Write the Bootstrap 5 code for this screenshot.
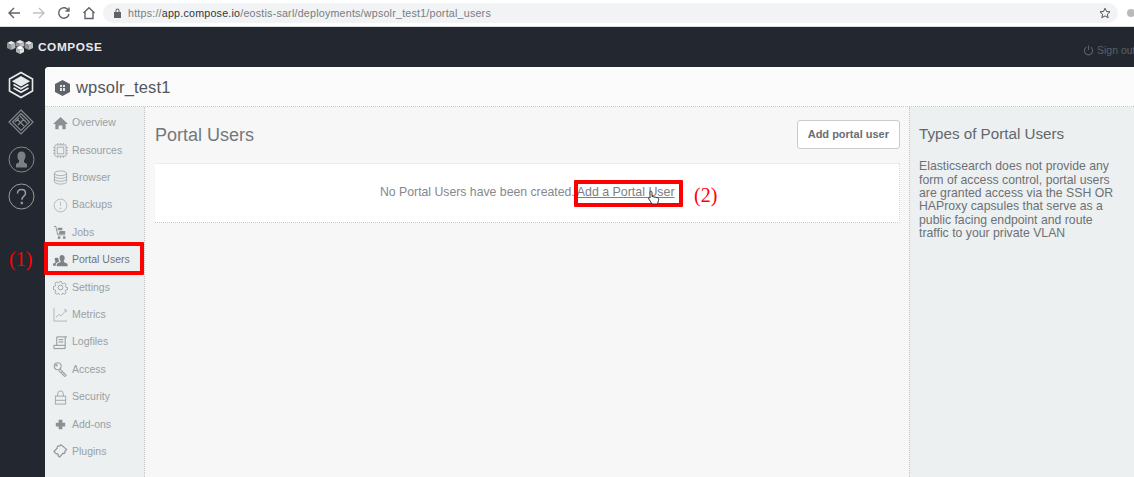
<!DOCTYPE html>
<html lang="en">
<head>
<meta charset="utf-8">
<title>Portal Users</title>
<link rel="stylesheet" href="https://cdn.jsdelivr.net/npm/bootstrap@5.3.0/dist/css/bootstrap.min.css">
<style>
html,body{height:477px;overflow:hidden}
body{font-family:"Liberation Sans",Arial,sans-serif;background:#23272f;color:#777}
.chrome-bar{height:27px;background:#fff;padding-left:7px;border-bottom:1px solid #d8d9db;overflow:hidden}
.chrome-btn{width:14px;height:14px;flex:none;margin-right:11px}
.url-box{height:20px;width:1015px;flex:none;margin-left:-4px;border-radius:10px;background:#f1f3f4;padding:0 7px 0 10px;font-size:10.7px;color:#777c82;letter-spacing:.02em}
.url-box b{font-weight:400;color:#33373c}
.lock-ico{margin-right:6px;flex:none}
.avatar-dot{width:8px;height:8px;border-radius:50%;background:#b8bbbe;flex:none;margin-left:9px}
.top-dark{height:40px;color:#e8e9ea;padding:0 0 0 7px}
.brand-name{font-size:11.8px;font-weight:700;letter-spacing:.05em;margin-left:5px;padding-top:2px}
.sign-out{font-size:10.5px;color:#5c6068;position:absolute;left:1083px;top:43px;white-space:nowrap;display:flex;align-items:center;gap:3px}
.shell{height:410px}
.rail{width:45px;flex:none;padding-right:3px;margin-top:-1px}
.rail-ico{height:37px;margin-bottom:.3px}
.panel{flex:1;min-width:0;background:#f7f7f7;border-top-left-radius:4px;overflow:hidden}
.panel-head{height:40px;background:#fbfbfb;border-bottom:1px dotted #c6c8c9;padding:2px 0 0 10px}
.panel-head h1{font-size:16.5px;font-weight:400;margin:0 0 0 6px;color:#53575c;letter-spacing:.01em}
.side-nav{width:100px;flex:none;background:#ecf0f1;border-right:1px dotted #c4c7c8;padding-top:2.5px}
.nav-row{height:27.4px;font-size:10.5px;color:#9a9fa3;padding-left:8px;gap:4px;white-space:nowrap}
.nav-row.on{color:#70757a}
.nav-row svg{width:15px;height:15px;flex:none}
.content-col{width:764px;flex:none;padding:13px 9px 0 10px}
.content-col h2{font-size:18px;font-weight:400;color:#74787c;margin:5px 0 0}
.add-btn{font-size:11px;font-weight:700;color:#6a6e72;background:#fff;border:1px solid #c9cbcc;border-radius:3px;height:29px;padding:0 10px;line-height:27px}
.empty-box{height:60px;margin-top:14px;background:#fff;border-bottom:1px dotted #c4c7c8;border-right:1px dotted #d4d6d7;border-top:1px solid #ececec;font-size:12.25px;color:#85898e;padding-left:225px;padding-bottom:1px}
.empty-box a{color:#7b8086;margin-left:2px;font-size:12.4px}
.info-col{flex:1;background:#ecf0f1;border-left:1px dotted #c4c7c8;padding:18px 10px 0 9px}
.info-col h3{font-size:15.2px;font-weight:400;color:#63676b;margin:0 0 17px}
.info-col p{font-size:12.25px;line-height:13.4px;color:#6d7175;margin:0;width:197px}
.red-mark{position:absolute;border:4px solid #f00;border-radius:1px}
.mark-one{left:44px;top:242px;width:100px;height:33px}
.mark-two{left:574px;top:180px;width:109px;height:27px}
.red-note{position:absolute;color:#f00;font-family:"Liberation Serif",serif;font-size:20px;line-height:1;white-space:nowrap}
.note-one{left:9px;top:249px}
.note-two{left:694px;top:185px}
.cursor-mark{position:absolute;left:647px;top:190px;width:13px;height:15px}
</style>
</head>
<body>
<div class="chrome-bar d-flex align-items-center">
  <svg class="chrome-btn" viewBox="0 0 14 14" fill="none" stroke="#5f6368" stroke-width="1.4"><path d="M13 7H2M7 2 2 7l5 5"/></svg>
  <svg class="chrome-btn" viewBox="0 0 14 14" fill="none" stroke="#bfc1c4" stroke-width="1.4"><path d="M1 7h11M7 2l5 5-5 5"/></svg>
  <svg class="chrome-btn" viewBox="0 0 14 14" fill="none" stroke="#5f6368" stroke-width="1.4"><path d="M11.5 4.500A5.200 5.200 0 1 0 12 8M12 1.500V5H8.500"/></svg>
  <svg class="chrome-btn" viewBox="0 0 14 14" fill="none" stroke="#5f6368" stroke-width="1.4"><path d="M1.500 7 7 1.800 12.500 7M3 6v6.500h8V6"/></svg>
  <div class="url-box d-flex align-items-center">
    <svg class="lock-ico" width="9" height="10" viewBox="0 0 9 10"><path fill="#5f6368" d="M1 4h7v6H1zM2.500 4V2.500a2 2 0 0 1 4 0V4h-1V2.500a1 1 0 0 0-2 0V4z"/></svg>
    <span>https://<b>app.compose.io</b>/eostis-sarl/deployments/wpsolr_test1/portal_users</span>
    <svg class="ms-auto" width="12" height="12" viewBox="0 0 24 24" fill="none" stroke="#4d5156" stroke-width="2"><path d="m12 2.500 3 6.400 7 .8-5.200 4.700 1.500 7L12 17.800 5.700 21.400l1.500-7L2 9.700l7-.8z"/></svg>
  </div>
  <span class="avatar-dot"></span>
</div>

<div class="top-dark d-flex align-items-center">
  <svg width="26" height="14" viewBox="0 0 26 14">
    <g>
      <path fill="#e4e5e6" d="M0 3 4.200 1l4.200 2-4.200 2z"/><path fill="#8f9296" d="M0 3v5l4.200 2V5z"/><path fill="#b9bbbe" d="M8.400 3v5l-4.200 2V5z"/>
      <path fill="#e4e5e6" d="M8.800 2 13 0l4.200 2L13 4z"/><path fill="#8f9296" d="M8.800 2v4l4.200 2V4z"/><path fill="#b9bbbe" d="M17.200 2v4L13 8V4z"/>
      <path fill="#e4e5e6" d="M17.600 3l4.200-2L26 3l-4.200 2z"/><path fill="#8f9296" d="M17.600 3v5l4.200 2V5z"/><path fill="#b9bbbe" d="M26 3v5l-4.200 2V5z"/>
      <path fill="#fff" d="M9 8l4-2 4 2-4 2z"/><path fill="#b0b2b5" d="M9 8v4l4 2v-4z"/><path fill="#dfe0e1" d="M17 8v4l-4 2v-4z"/>
    </g>
  </svg>
  <span class="brand-name">COMPOSE</span>
</div>
<div class="sign-out">
  <svg width="11" height="11" viewBox="0 0 12 12" fill="none" stroke="#5c6068" stroke-width="1.2"><path d="M3.500 2.500a4.500 4.500 0 1 0 5 0M6 .5v5"/></svg>Sign out
</div>

<div class="shell d-flex">
  <div class="rail d-flex flex-column align-items-center">
    <div class="rail-ico d-flex align-items-center justify-content-center">
      <svg width="26" height="28" viewBox="0 0 26 28" fill="none" stroke="#e9eaeb" stroke-width="1.6"><path d="M13 1.500 24.500 8v12L13 26.500 1.500 20V8z"/><path d="M13 6l7.500 4.300L13 14.500 5.500 10.300z" fill="#e9eaeb"/><path d="m5.500 13.500 7.500 4.300 7.500-4.300M5.500 17l7.500 4.300 7.500-4.300"/></svg>
    </div>
    <div class="rail-ico d-flex align-items-center justify-content-center">
      <svg width="26" height="26" viewBox="0 0 26 26" fill="none" stroke="#85888c" stroke-width="1.2"><path d="M13 1 25 13 13 25 1 13z"/><path d="M13 4.500 21.500 13 13 21.500 4.500 13z"/><path d="M9 10l7 7M12 7l7 7M7 13l4-4M16 10l-3 3M10 16l3-3"/></svg>
    </div>
    <div class="rail-ico d-flex align-items-center justify-content-center">
      <svg width="27" height="27" viewBox="0 0 27 27" fill="none" stroke="#85888c" stroke-width="1"><circle cx="13.500" cy="13.500" r="12.500"/><path fill="#7c7f84" stroke="none" d="M13.500 5.500c2.800 0 4 2 4 4.500 0 2-.8 3.400-1.500 4.300v2l3 1.700v3.500H8V18l3-1.700v-2C9.800 13.400 9.500 12 9.500 10c0-2.500 1.200-4.500 4-4.500z"/></svg>
    </div>
    <div class="rail-ico d-flex align-items-center justify-content-center">
      <svg width="27" height="27" viewBox="0 0 27 27" fill="none" stroke="#9a9da0" stroke-width="1"><circle cx="13.500" cy="13.500" r="12.500"/><path stroke-width="1.500" d="M9.500 10.500c0-2.500 1.800-4 4-4s4 1.500 4 3.700c0 3-3.700 3.300-3.700 6.500"/><circle cx="13.800" cy="20" r=".9" fill="#9a9da0"/></svg>
    </div>
  </div>

  <div class="panel d-flex flex-column">
    <div class="panel-head d-flex align-items-center">
      <svg width="15" height="16" viewBox="0 0 15 16"><path fill="#5f6469" d="M7.500 0 15 4v8l-7.500 4L0 12V4z"/><path fill="#e6e7e8" d="M5 5h2v2H5zM8 5h2v2H8zM5 8h2v3H5zM8 8h2v3H8z"/></svg>
      <h1>wpsolr_test1</h1>
    </div>
    <div class="d-flex flex-grow-1">
      <nav class="side-nav">
        <div class="nav-row d-flex align-items-center"><svg viewBox="0 0 16 16"><path fill="#8b9095" d="M8 1 16 8.500h-2.500V14H10v-4H6v4H2.500V8.500H0z"/></svg>Overview</div>
        <div class="nav-row d-flex align-items-center"><svg viewBox="0 0 16 16" fill="none" stroke="#a7abae"><rect x="2" y="2" width="12" height="12" rx="1"/><rect x="4.500" y="4.500" width="7" height="7"/><path d="M5 0v2M8 0v2M11 0v2M5 14v2M8 14v2M11 14v2M0 5h2M0 8h2M0 11h2M14 5h2M14 8h2M14 11h2"/></svg>Resources</div>
        <div class="nav-row d-flex align-items-center"><svg viewBox="0 0 16 16" fill="none" stroke="#a7abae"><ellipse cx="8" cy="3.500" rx="6.500" ry="2.500"/><path d="M1.500 3.500v9c0 1.400 3 2.500 6.500 2.500s6.500-1.100 6.500-2.500v-9M1.500 6.500c0 1.400 3 2.500 6.500 2.500s6.500-1.100 6.500-2.500M1.500 9.500c0 1.400 3 2.500 6.500 2.500s6.500-1.100 6.500-2.500"/></svg>Browser</div>
        <div class="nav-row d-flex align-items-center"><svg viewBox="0 0 16 16" fill="none" stroke="#b5b9bc"><circle cx="8" cy="8" r="6.800"/><path d="M8 4v4.500"/><circle cx="8" cy="11" r=".5"/></svg>Backups</div>
        <div class="nav-row d-flex align-items-center"><svg viewBox="0 0 16 16"><path fill="none" stroke="#8b9095" d="M1 1.500h2l2 9h8"/><path fill="#8b9095" d="M5 3h5v2.500H5zM7 6.500h6v3H6z"/><circle cx="6.500" cy="13.500" r="1.500" fill="#8b9095"/><circle cx="12" cy="13.500" r="1.500" fill="#8b9095"/></svg>Jobs</div>
        <div class="nav-row on d-flex align-items-center"><svg viewBox="0 0 16 16"><path fill="#7d8287" d="M9.500 2c2 0 3 1.500 3 3.200 0 1.300-.5 2.300-1 3v1.300l4 2v2.500H4v-2.500l4-2V8.200c-.5-.7-1-1.700-1-3C7 3.500 7.500 2 9.500 2zM4 5c1 0 1.600.5 1.900 1.300 0 1 .2 2 .8 2.700L3 11v2.500H0v-2l2.500-1.500V8.500C2 8 1.700 7.200 1.700 6.500 1.700 5.500 2.700 5 4 5z"/></svg>Portal Users</div>
        <div class="nav-row d-flex align-items-center"><svg viewBox="0 0 16 16" fill="none" stroke="#9a9fa3"><circle cx="8" cy="8" r="2.500"/><path d="M6.800 1h2.400l.4 2 1.600.7 1.800-1.100 1.700 1.700-1.100 1.800.7 1.600 2 .4v2.400l-2 .4-.7 1.600 1.100 1.800-1.700 1.700-1.800-1.100-1.600.7-.4 2H6.800l-.4-2-1.600-.7-1.800 1.100-1.700-1.700 1.100-1.800-.7-1.600-2-.4V6.800l2-.4.7-1.600-1.100-1.800 1.700-1.700 1.800 1.100 1.600-.7z" transform="translate(.8 .8) scale(.9)"/></svg>Settings</div>
        <div class="nav-row d-flex align-items-center"><svg viewBox="0 0 16 16" fill="none" stroke="#b0b4b7"><path d="M1 1v14h14"/><path d="M3 11l3.500-3 2 1.500L14 3.500M11.500 3H14v2.500"/></svg>Metrics</div>
        <div class="nav-row d-flex align-items-center"><svg viewBox="0 0 16 16" fill="none" stroke="#8b9095"><path d="M4 2h11M4 2v9M13 2v9M6 5h5M6 7.500h5"/><path d="M1 11h12v3.500H1z"/></svg>Logfiles</div>
        <div class="nav-row d-flex align-items-center"><svg viewBox="0 0 16 16" fill="none" stroke="#a0a4a8" stroke-width="1.200"><circle cx="5" cy="4.500" r="3.700"/><circle cx="3.700" cy="3.500" r=".8"/><path d="M7.500 7.500l6.500 6.500-1.500 1.500-6.500-6.500M9 11l1.500-1.500M11 13l1.500-1.500"/></svg>Access</div>
        <div class="nav-row d-flex align-items-center"><svg viewBox="0 0 16 16" fill="none" stroke="#a0a4a8"><rect x="2.500" y="6.500" width="11" height="8.500"/><path d="M5 6.500V4a3 3 0 0 1 6 0v2.500M2.500 11h11"/></svg>Security</div>
        <div class="nav-row d-flex align-items-center"><svg viewBox="0 0 16 16"><path fill="#8b9095" d="M6 3h4v3h3v4h-3v3H6v-3H3V6h3z"/></svg>Add-ons</div>
        <div class="nav-row d-flex align-items-center"><svg viewBox="0 0 16 16" fill="none" stroke="#8b9095" stroke-width="1.200"><path d="M1 8l3.500-3.500c-.7-1.500.8-3 2.300-2.300L8.500 .8l6 5-1.800 2c.7 1.500-.8 2.700-2 2l-3.500 4-1.800-1.300c.7-1.500-.6-2.800-2-2z"/></svg>Plugins</div>
      </nav>
      <main class="content-col">
        <div class="d-flex justify-content-between align-items-start">
          <h2>Portal Users</h2>
          <div class="add-btn">Add portal user</div>
        </div>
        <div class="empty-box d-flex align-items-center">
          <div class="text-nowrap">No Portal Users have been created.<a href="#">Add a Portal User</a></div>
        </div>
      </main>
      <aside class="info-col">
        <h3>Types of Portal Users</h3>
        <p>Elasticsearch does not provide any form of access control, portal users are granted access via the SSH OR HAProxy capsules that serve as a public facing endpoint and route traffic to your private VLAN</p>
      </aside>
    </div>
  </div>
</div>

<div class="red-mark mark-one"></div>
<div class="red-mark mark-two"></div>
<div class="red-note note-one">(1)</div>
<div class="red-note note-two">(2)</div>
<svg class="cursor-mark" viewBox="0 0 13 15"><path fill="#fff" stroke="#333" d="M3 1.500c1-1 2 0 2 1v4l5 1c1.500.5 2 1 1.500 3l-1 3.500H5L1.500 8.500c0-1 1-1 1.500-.5z"/></svg>
</body>
</html>
